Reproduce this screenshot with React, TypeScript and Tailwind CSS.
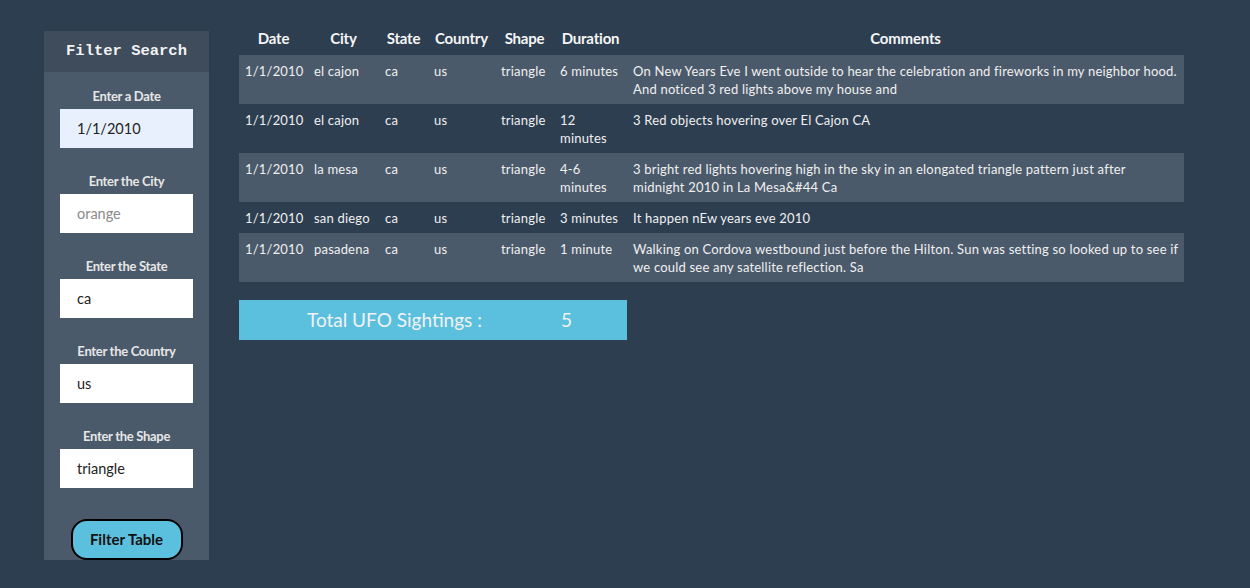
const rows = [
  {
    date: "1/1/2010",
    city: "el cajon",
    state: "ca",
    country: "us",
    shape: "triangle",
    duration: "6 minutes",
    comments: [
      "On New Years Eve I went outside to hear the celebration and fireworks in my neighbor hood.",
      "And noticed 3 red lights above my house and",
    ],
  },
  {
    date: "1/1/2010",
    city: "el cajon",
    state: "ca",
    country: "us",
    shape: "triangle",
    duration: "12 minutes",
    comments: ["3 Red objects hovering over El Cajon CA"],
  },
  {
    date: "1/1/2010",
    city: "la mesa",
    state: "ca",
    country: "us",
    shape: "triangle",
    duration: "4-6 minutes",
    comments: [
      "3 bright red lights hovering high in the sky in an elongated triangle pattern just after",
      "midnight 2010 in La Mesa&#44 Ca",
    ],
  },
  {
    date: "1/1/2010",
    city: "san diego",
    state: "ca",
    country: "us",
    shape: "triangle",
    duration: "3 minutes",
    comments: ["It happen nEw years eve 2010"],
  },
  {
    date: "1/1/2010",
    city: "pasadena",
    state: "ca",
    country: "us",
    shape: "triangle",
    duration: "1 minute",
    comments: [
      "Walking on Cordova westbound just before the Hilton. Sun was setting so looked up to see if",
      "we could see any satellite reflection. Sa",
    ],
  },
];

const filters = [
  { label: "Enter a Date", value: "1/1/2010", filled: true },
  { label: "Enter the City", value: "orange", placeholder: true },
  { label: "Enter the State", value: "ca" },
  { label: "Enter the Country", value: "us" },
  { label: "Enter the Shape", value: "triangle" },
];

function Sidebar() {
  return (
    <aside className="w-[165px] h-[529px] bg-[#4b5a6b] flex flex-col shrink-0">
      <div className="h-[41px] bg-[#3e4c5c] flex items-center justify-center">
        <h3 className="font-['Liberation_Mono',monospace] font-bold text-[15.5px] text-[#f2f2f2]">
          Filter Search
        </h3>
      </div>
      <div className="flex flex-col items-center pt-[17px]">
        {filters.map((f) => (
          <div key={f.label} className="flex flex-col items-center mb-[26px]">
            <label className="text-[13px] font-bold text-[#e6e6e6] leading-[14px] mb-[6px] tracking-[-0.3px]">
              {f.label}
            </label>
            <div
              className={
                "w-[133px] h-[39px] flex items-center pl-[17px] text-[14.5px] " +
                (f.filled ? "bg-[#e8f0fe] " : "bg-white ") +
                (f.placeholder ? "text-[#8a8a8a]" : "text-[#222]")
              }
            >
              {f.value}
            </div>
          </div>
        ))}
        <button className="mt-[5px] w-[112px] h-[41px] rounded-[16px] border-2 border-black bg-[#5bc0de] text-[15px] font-bold text-[#111]">
          Filter Table
        </button>
      </div>
    </aside>
  );
}

export default function App() {
  return (
    <div className="w-[1250px] h-[588px] bg-[#2c3e50] font-['Lato',sans-serif] flex items-start pl-[44px] pt-[31px]">
      <Sidebar />
      <main className="ml-[30px] -mt-[6px] w-[945px]">
        <table className="w-[945px] table-fixed border-collapse text-[13px] text-[#f0f0f0]">
          <colgroup>
            <col className="w-[69px]" />
            <col className="w-[71px]" />
            <col className="w-[49px]" />
            <col className="w-[67px]" />
            <col className="w-[59px]" />
            <col className="w-[73px]" />
            <col />
          </colgroup>
          <thead>
            <tr className="h-[30px]">
              {["Date", "City", "State", "Country", "Shape", "Duration", "Comments"].map((h) => (
                <th key={h} className="text-[15px] font-bold text-center align-top pt-[2px] text-[#f5f5f5] tracking-[-0.2px]">
                  {h}
                </th>
              ))}
            </tr>
          </thead>
          <tbody>
            {rows.map((r, i) => (
              <tr key={i} className={i % 2 === 0 ? "bg-[#4b5a6b]" : ""}>
                {[r.date, r.city, r.state, r.country, r.shape, r.duration].map((c, j) => (
                  <td key={j} className="align-top px-[6px] pt-[7px] pb-[6px] leading-[18px] tracking-[0.2px]">
                    {c}
                  </td>
                ))}
                <td className="align-top pl-[6px] pt-[7px] pb-[6px] leading-[18px] tracking-[0.2px] whitespace-nowrap">
                  {r.comments.map((line, k) => (
                    <div key={k}>{line}</div>
                  ))}
                </td>
              </tr>
            ))}
          </tbody>
        </table>
        <div className="mt-[18px] w-[388px] h-[40px] bg-[#5bc0de] flex items-center text-[19px] text-[#f2f2f2]">
          <span className="ml-[68px] w-[254px]">Total UFO Sightings :</span>
          <span>5</span>
        </div>
      </main>
    </div>
  );
}
